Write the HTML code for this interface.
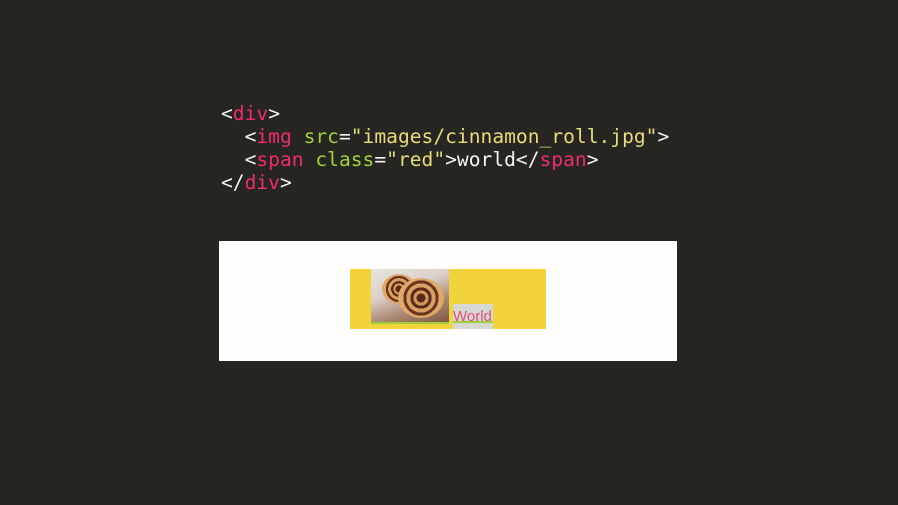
<!DOCTYPE html>
<html><head><style>
body{margin:0;width:898px;height:505px;background:#262521;position:relative;overflow:hidden}
pre{position:absolute;left:221px;top:102px;margin:0;font-family:"DejaVu Sans Mono","Liberation Mono",monospace;font-size:19.6px;line-height:23px;color:#f4f4f0}
.t{color:#f02b6e}.a{color:#9ed43a}.s{color:#e8db7a}
.box{position:absolute;left:219px;top:241px;width:458px;height:120px;background:#fffdfe}
.y{position:absolute;left:350px;top:269px;width:196px;height:60px;background:#f3d33c}
.img{position:absolute;left:371px;top:269px;width:78px;height:53px;background:linear-gradient(160deg,#e9e4e0 0%,#d9cfc8 40%,#a98670 70%,#7e5a44 100%)}
.g{position:absolute;left:371px;top:322px;width:78px;height:2px;background:#9ccf3a}
.r{position:absolute;border-radius:50%;background:radial-gradient(circle,#5a2a18 0 15%,#d49a5c 15% 25%,#5a2a18 25% 35%,#d9a062 35% 48%,#6b3420 48% 58%,#e0a86a 58% 75%,#c0763c 75%)}
.w{position:absolute;left:453px;top:304px;width:40px;height:25px;background:#d8d8d2;font-family:"Liberation Sans",sans-serif;font-size:15px;color:#e0507a;line-height:25px}
.wu{position:absolute;left:453px;top:321px;width:40px;height:2px;background:#9ccf3a}
</style></head><body>
<pre><span>&lt;</span><span class="t">div</span>&gt;
  &lt;<span class="t">img</span> <span class="a">src</span>=<span class="s">"images/cinnamon_roll.jpg"</span>&gt;
  &lt;<span class="t">span</span> <span class="a">class</span>=<span class="s">"red"</span>&gt;world&lt;/<span class="t">span</span>&gt;
&lt;/<span class="t">div</span>&gt;</pre>
<div class="box"></div>
<div class="y"></div>
<div class="img"></div>
<div class="r" style="left:382px;top:274px;width:34px;height:30px"></div>
<div class="r" style="left:398px;top:278px;width:46px;height:40px"></div>
<div class="g"></div>
<div class="w">World</div>
<div class="wu"></div>
</body></html>
